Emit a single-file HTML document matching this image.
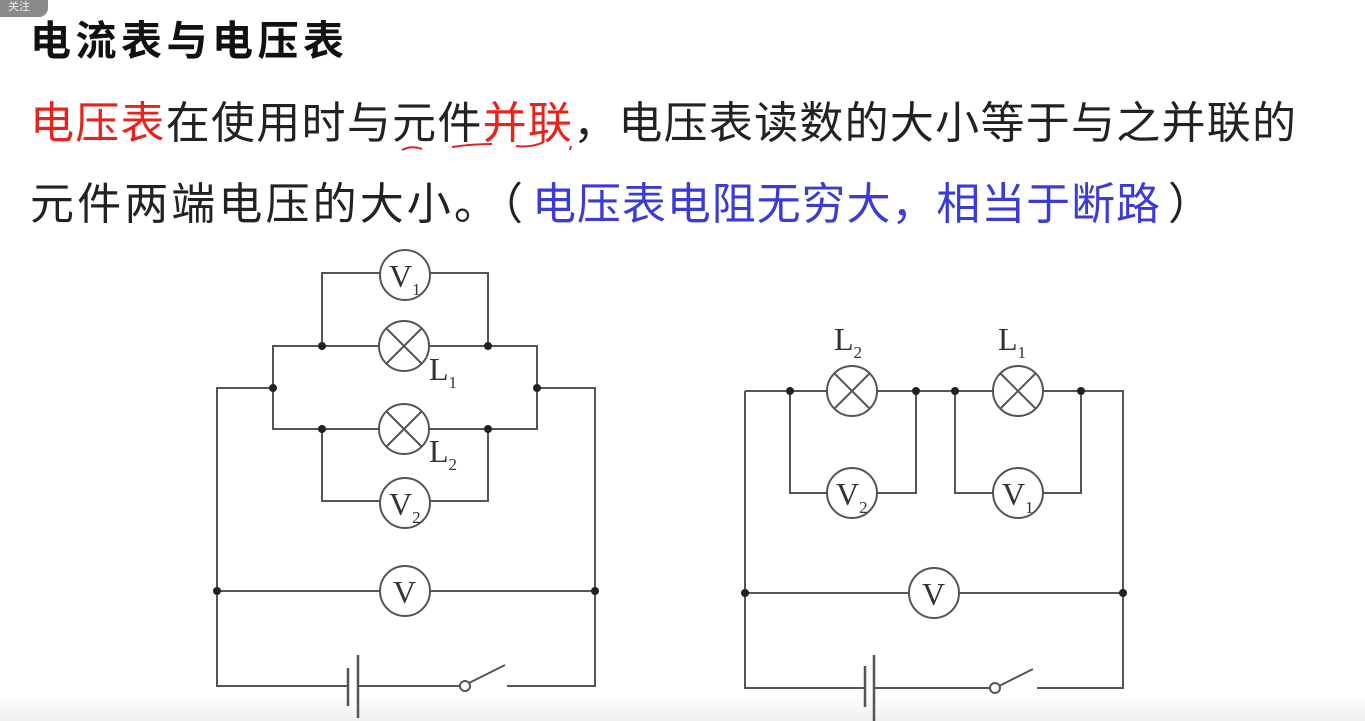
<!DOCTYPE html>
<html><head><meta charset="utf-8"><style>
html,body{margin:0;padding:0;background:#fff;width:1365px;height:721px;overflow:hidden}
svg{display:block}
.t{font-family:"Liberation Sans","Noto Sans CJK SC",sans-serif}
.s{font-family:"Liberation Serif",serif;fill:#333}
</style></head><body>
<svg width="1365" height="721" viewBox="0 0 1365 721" xmlns="http://www.w3.org/2000/svg">
<defs><linearGradient id="bg" x1="0" y1="0" x2="0" y2="1"><stop offset="0" stop-color="#fff"/><stop offset="1" stop-color="#eef0f2"/></linearGradient></defs>
<rect x="0" y="695" width="1365" height="26" fill="url(#bg)"/>
<rect x="-10" y="-10" width="58" height="27" rx="9" fill="#8a8a8a"/>
<text x="8" y="10" font-size="11" fill="#eee" class="t">关注</text>
<text x="30" y="55" font-size="41" font-weight="bold" fill="#111" class="t" textLength="314" lengthAdjust="spacing">电流表与电压表</text>
<text x="30" y="138" font-size="44" class="t" fill="#222" textLength="1266" lengthAdjust="spacing"><tspan fill="#e8231d">电压表</tspan>在使用时与元件<tspan fill="#e8231d">并联</tspan>，电压表读数的大小等于与之并联的</text>
<path d="M402 150 q10 -5 20 -1 M452 147 q20 -3 40 -3 M516 146 q15 2 28 -4 M570 150 l1 -4" stroke="#e02020" stroke-width="2" fill="none"/>
<text x="30" y="219" font-size="44" class="t" fill="#222" textLength="493" lengthAdjust="spacing">元件两端电压的大小。（</text>
<text x="532" y="219" font-size="44" class="t" fill="#3b3bd6" textLength="628" lengthAdjust="spacing">电压表电阻无穷大，相当于断路</text>
<text x="1168" y="219" font-size="44" class="t" fill="#222">）</text>
<g stroke="#555" stroke-width="2" fill="none">
<path d="M322 346 V273 H380 M430 273 H488 V346"/>
<path d="M273 388 V346 H379 M429 346 H537 V388"/>
<path d="M273 388 V429 H379 M429 429 H537 V388"/>
<path d="M322 429 V501 H380 M430 501 H488 V429"/>
<path d="M273 388 H217 V686 H348 M537 388 H595 V686 H507"/>
<path d="M217 591 H380 M430 591 H595"/>
<path d="M358 686 H460"/>
<path d="M358 655 V718 M348 668 V706" stroke-width="2.5"/>
<path d="M469 683 L505 665"/>
<circle cx="405" cy="275" r="25"/><circle cx="404" cy="346" r="25"/><circle cx="404" cy="429" r="25"/><circle cx="405" cy="503" r="25"/><circle cx="405" cy="591" r="25"/>
<circle cx="465" cy="686" r="5" fill="#fff"/>
<path d="M386 328 L422 364 M422 328 L386 364 M386 411 L422 447 M422 411 L386 447"/>
<path d="M745 391 H827 M877 391 H993 M1043 391 H1123 V688 H1037 M745 391 V688 H865"/>
<path d="M790 391 V493 H827 M877 493 H916 V391 M955 391 V493 H993 M1043 493 H1081 V391"/>
<path d="M745 593 H909 M959 593 H1123"/>
<path d="M874 688 H990"/>
<path d="M874 655 V721 M865 666 V707" stroke-width="2.5"/>
<path d="M999 686 L1033 669"/>
<circle cx="852" cy="391" r="25"/><circle cx="1018" cy="391" r="25"/><circle cx="852" cy="493" r="25"/><circle cx="1018" cy="493" r="25"/><circle cx="934" cy="593" r="25"/>
<circle cx="995" cy="688" r="5" fill="#fff"/>
<path d="M834 373 L870 409 M870 373 L834 409 M1000 373 L1036 409 M1036 373 L1000 409"/>
</g>
<g fill="#222">
<circle cx="322" cy="346" r="4"/><circle cx="488" cy="346" r="4"/><circle cx="273" cy="388" r="4"/><circle cx="537" cy="388" r="4"/><circle cx="322" cy="429" r="4"/><circle cx="488" cy="429" r="4"/><circle cx="217" cy="591" r="4"/><circle cx="595" cy="591" r="4"/>
<circle cx="790" cy="391" r="4"/><circle cx="916" cy="391" r="4"/><circle cx="955" cy="391" r="4"/><circle cx="1081" cy="391" r="4"/><circle cx="745" cy="593" r="4"/><circle cx="1123" cy="593" r="4"/>
</g>
<g class="s" font-size="32">
<text x="389" y="287">V<tspan font-size="17" dy="8">1</tspan></text>
<text x="389" y="515">V<tspan font-size="17" dy="8">2</tspan></text>
<text x="393" y="603">V</text>
<text x="429" y="380">L<tspan font-size="17" dy="8">1</tspan></text>
<text x="429" y="462">L<tspan font-size="17" dy="8">2</tspan></text>
<text x="836" y="505">V<tspan font-size="17" dy="8">2</tspan></text>
<text x="1002" y="505">V<tspan font-size="17" dy="8">1</tspan></text>
<text x="922" y="605">V</text>
<text x="834" y="350">L<tspan font-size="17" dy="8">2</tspan></text>
<text x="998" y="350">L<tspan font-size="17" dy="8">1</tspan></text>
</g>
</svg>
</body></html>
